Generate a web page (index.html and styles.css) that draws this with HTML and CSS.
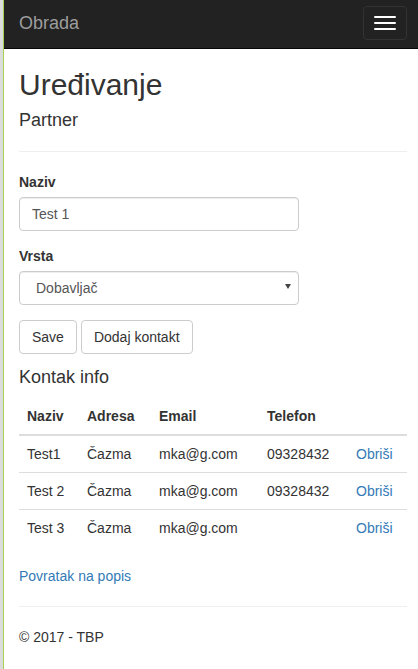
FILE: index.html
```html
<!DOCTYPE html>
<html lang="hr">
<head>
<meta charset="utf-8">
<title>Uređivanje - Obrada</title>
<link rel="stylesheet" href="styles.css">
</head>
<body>
<div class="frame">
  <div class="edge"></div>
  <div class="page">
    <nav class="navbar">
      <a class="brand" href="#">Obrada</a>
      <button class="toggle" type="button" aria-label="Izbornik">
        <span class="bar"></span><span class="bar"></span><span class="bar"></span>
      </button>
    </nav>
    <main class="content">
      <h2 class="title">Uređivanje</h2>
      <h4 class="subtitle">Partner</h4>
      <hr class="rule">
      <div class="form-group">
        <label class="label" for="naziv">Naziv</label>
        <input class="control" id="naziv" type="text" value="Test 1">
      </div>
      <div class="form-group">
        <label class="label" for="vrsta">Vrsta</label>
        <div class="select-wrap">
          <select class="control select" id="vrsta">
            <option>Dobavljač</option>
          </select>
          <span class="caret"></span>
        </div>
      </div>
      <div class="actions">
        <button class="btn" type="button">Save</button>
        <button class="btn" type="button">Dodaj kontakt</button>
      </div>
      <h4 class="section">Kontak info</h4>
      <table class="table">
        <thead>
          <tr>
            <th class="c-naziv">Naziv</th>
            <th class="c-adresa">Adresa</th>
            <th class="c-email">Email</th>
            <th class="c-tel">Telefon</th>
            <th></th>
          </tr>
        </thead>
        <tbody>
          <tr><td>Test1</td><td>Čazma</td><td>mka@g.com</td><td>09328432</td><td><a href="#">Obriši</a></td></tr>
          <tr><td>Test 2</td><td>Čazma</td><td>mka@g.com</td><td>09328432</td><td><a href="#">Obriši</a></td></tr>
          <tr><td>Test 3</td><td>Čazma</td><td>mka@g.com</td><td></td><td><a href="#">Obriši</a></td></tr>
        </tbody>
      </table>
      <div class="back"><a href="#">Povratak na popis</a></div>
      <hr class="rule">
      <footer class="footer">
        <p>© 2017 - TBP</p>
      </footer>
    </main>
  </div>
</div>
</body>
</html>
```

FILE: styles.css
```css
html, body {
  margin: 0;
  padding: 0;
  overflow: hidden;
  background: #fff;
}

body {
  font-family: "Liberation Sans", Arial, sans-serif;
  font-size: 14px;
  line-height: 20px;
  color: #333;
}

.frame {
  display: flex;
  width: 422px;
  min-height: 669px;
}

.edge {
  width: 3px;
  flex-shrink: 0;
  background: #dcdcdc;
  border-right: 1px solid #a9cf57;
}

.page {
  width: 418px;
  flex-shrink: 0;
}

.navbar {
  height: 48px;
  background: #222;
  border-bottom: 1px solid #080808;
  display: flex;
  justify-content: space-between;
  align-items: flex-start;
  padding: 0 15px;
}

.brand {
  font-size: 18px;
  line-height: 20px;
  padding-top: 13px;
  color: #9d9d9d;
  text-decoration: none;
}

.toggle {
  margin-top: 6px;
  width: 44px;
  height: 34px;
  padding: 9px 10px;
  background: #222;
  border: 1px solid #333;
  border-radius: 4px;
  display: flex;
  flex-direction: column;
  gap: 4px;
  box-sizing: border-box;
}

.bar {
  display: block;
  width: 22px;
  height: 2px;
  border-radius: 1px;
  background: #fff;
}

.content {
  padding: 0 15px;
}

.title {
  font-size: 30px;
  line-height: 33px;
  font-weight: 500;
  margin: 19px 0 10px;
}

.subtitle {
  font-size: 18px;
  line-height: 19.8px;
  font-weight: 500;
  margin: 10px 0 10px;
}

.rule {
  border: 0;
  border-top: 1px solid #eee;
  margin: 20px 0;
  height: 0;
}

.form-group {
  margin-bottom: 15px;
}

.label {
  display: block;
  font-weight: bold;
  margin-bottom: 5px;
}

.control {
  display: block;
  box-sizing: border-box;
  width: 100%;
  max-width: 280px;
  height: 34px;
  padding: 6px 12px;
  font-family: inherit;
  font-size: 14px;
  line-height: 20px;
  color: #555;
  background: #fff;
  border: 1px solid #ccc;
  border-radius: 4px;
  box-shadow: inset 0 1px 1px rgba(0, 0, 0, 0.075);
  margin: 0;
}

.select-wrap {
  position: relative;
  max-width: 280px;
}

.select {
  -webkit-appearance: none;
  appearance: none;
  padding-left: 16px;
}

.caret {
  position: absolute;
  right: 8px;
  top: 13px;
  width: 0;
  height: 0;
  border-left: 3px solid transparent;
  border-right: 3px solid transparent;
  border-top: 5px solid #444;
  pointer-events: none;
}

.actions {
  display: flex;
  gap: 4px;
  margin-bottom: 14px;
}

.btn {
  height: 34px;
  padding: 6px 12px;
  font-family: inherit;
  font-size: 14px;
  line-height: 20px;
  color: #333;
  background: #fff;
  border: 1px solid #ccc;
  border-radius: 4px;
  box-sizing: border-box;
}

.section {
  font-size: 18px;
  line-height: 19.8px;
  font-weight: 500;
  margin: 0 0 10px;
}

.table {
  width: 100%;
  border-collapse: collapse;
  border-spacing: 0;
  table-layout: fixed;
  margin-bottom: 20px;
}

.table th,
.table td {
  padding: 8px;
  line-height: 20px;
  text-align: left;
  vertical-align: top;
}

.table th {
  font-weight: bold;
  border-bottom: 2px solid #ddd;
}

.table td {
  border-top: 1px solid #ddd;
  white-space: nowrap;
}

.c-naziv { width: 44px; }
.c-adresa { width: 56px; }
.c-email { width: 92px; }
.c-tel { width: 73px; }

a {
  color: #337ab7;
  text-decoration: none;
}

.back {
  line-height: 20px;
}

.footer p {
  margin: 0 0 10px;
}
```
